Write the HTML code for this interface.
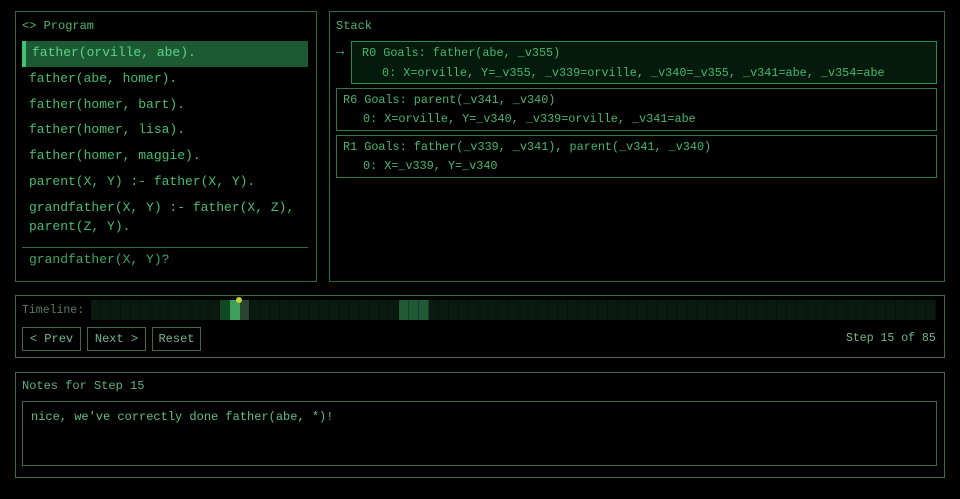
<!DOCTYPE html>
<html><head><meta charset="utf-8"><style>
*{box-sizing:border-box;margin:0;padding:0}
body{width:960px;height:499px;background:#000;font-family:"Liberation Mono","DejaVu Sans Mono",monospace;color:#4cc276;position:relative;overflow:hidden}
.p{position:absolute;border:1px solid #2d6b3e}
.lbl{position:absolute;font-size:11.5px;color:#4cb870}
.line{position:absolute;left:29px;font-size:13px;color:#45bf6f;white-space:nowrap}
.fr{position:absolute;border:1px solid #2f7a45;font-size:11.8px;white-space:nowrap;color:#46b86c}
.fr div{position:absolute}
.btn{position:absolute;top:327px;height:24px;border:1px solid #3f6a45;font-size:12px;color:#6fb88a;line-height:22px;text-align:center}
</style></head><body>
<div class="p" style="left:15px;top:11px;width:302px;height:271px"></div>
<div class="lbl" style="left:22px;top:19px;font-size:12px">&lt;&gt; Program</div>
<div style="position:absolute;left:22px;top:41px;width:286px;height:26px;background:#1c5a33;border-left:4px solid #3fc46e"></div>
<div class="line" style="left:32px;top:45px;color:#5cd488">father(orville, abe).</div>
<div class="line" style="top:71px">father(abe, homer).</div>
<div class="line" style="top:97px">father(homer, bart).</div>
<div class="line" style="top:122px">father(homer, lisa).</div>
<div class="line" style="top:148px">father(homer, maggie).</div>
<div class="line" style="top:174px">parent(X, Y) :- father(X, Y).</div>
<div class="line" style="top:200px">grandfather(X, Y) :- father(X, Z),</div>
<div class="line" style="top:219px">parent(Z, Y).</div>
<div style="position:absolute;left:22px;top:247px;width:286px;height:1px;background:#2d6b3e"></div>
<div class="line" style="top:252px;color:#3fa862">grandfather(X, Y)?</div>

<div class="p" style="left:329px;top:11px;width:616px;height:271px"></div>
<div class="lbl" style="left:336px;top:19px;font-size:12px">Stack</div>
<div class="lbl" style="left:336px;top:44px;font-size:14px">→</div>
<div class="fr" style="left:351px;top:41px;width:586px;height:43px;background:#041a0c;border-color:#2f8a4d">
<div style="left:10px;top:4px">R0 Goals: father(abe, _v355)</div>
<div style="left:30px;top:24px">0: X=orville, Y=_v355, _v339=orville, _v340=_v355, _v341=abe, _v354=abe</div></div>
<div class="fr" style="left:336px;top:88px;width:601px;height:43px">
<div style="left:6px;top:4px">R6 Goals: parent(_v341, _v340)</div>
<div style="left:26px;top:23px">0: X=orville, Y=_v340, _v339=orville, _v341=abe</div></div>
<div class="fr" style="left:336px;top:135px;width:601px;height:43px">
<div style="left:6px;top:4px">R1 Goals: father(_v339, _v341), parent(_v341, _v340)</div>
<div style="left:26px;top:23px">0: X=_v339, Y=_v340</div></div>

<div class="p" style="left:15px;top:295px;width:930px;height:63px;border-color:#3f6a45"></div>
<div class="lbl" style="left:22px;top:304px;color:#5a7a62;font-size:11.5px">Timeline:</div>
<div style="position:absolute;left:91px;top:300px;width:845px;height:20px;background:repeating-linear-gradient(90deg,#0b1a10 0 8.94px,#06100a 8.94px 9.94px)"></div>
<div style="position:absolute;left:220px;top:300px;width:10px;height:20px;background:#0f4a25"></div>
<div style="position:absolute;left:230px;top:300px;width:10px;height:20px;background:#3f9e5c"></div>
<div style="position:absolute;left:240px;top:300px;width:9px;height:20px;background:#28452f"></div>
<div style="position:absolute;left:399px;top:300px;width:30px;height:20px;background:repeating-linear-gradient(90deg,#1f5a34 0 9px,#173f26 9px 10px)"></div>
<div style="position:absolute;left:236px;top:297px;width:6px;height:6px;border-radius:50%;background:#c8d43a"></div>
<div class="btn" style="left:22px;width:59px">&lt; Prev</div>
<div class="btn" style="left:87px;width:59px">Next &gt;</div>
<div class="btn" style="left:152px;width:49px">Reset</div>
<div class="lbl" style="left:846px;top:332px;color:#6fb88a;font-size:11.5px">Step 15 of 85</div>

<div class="p" style="left:15px;top:372px;width:930px;height:106px;border-color:#3f6a45"></div>
<div class="lbl" style="left:22px;top:379px;color:#5fb07a;font-size:12px">Notes for Step 15</div>
<div style="position:absolute;left:22px;top:401px;width:915px;height:65px;border:1px solid #3f6a45;font-size:12px;color:#5fc07f;padding:8px 0 0 8px">nice, we've correctly done father(abe, *)!</div>
</body></html>
